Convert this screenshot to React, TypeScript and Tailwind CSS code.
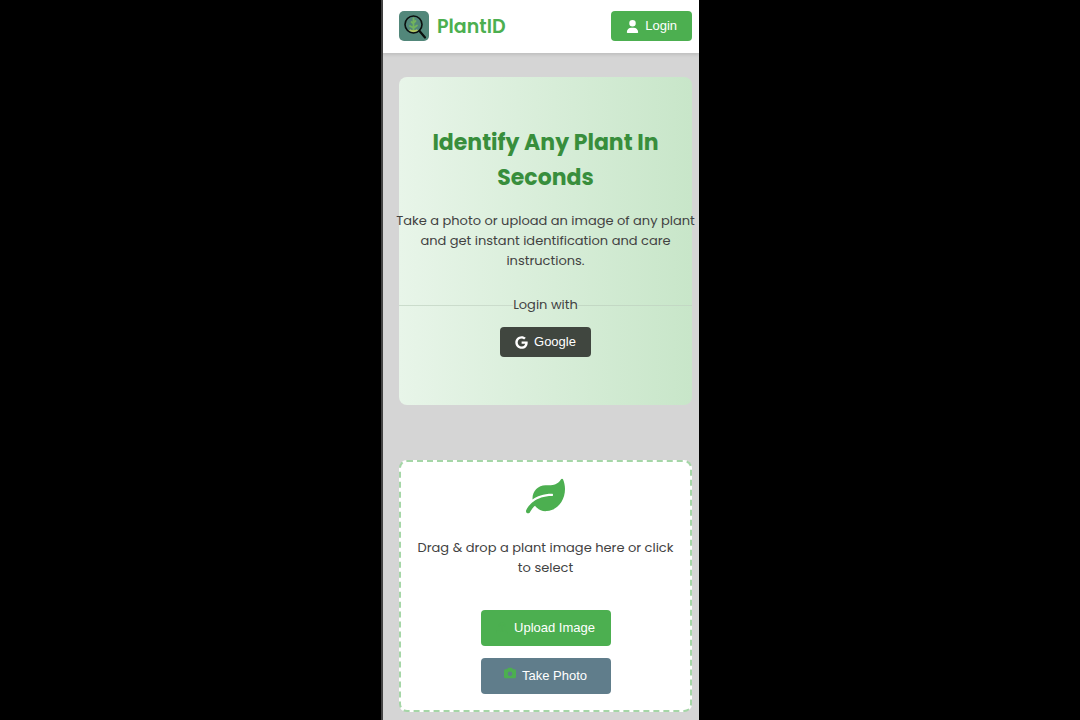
import React from "react";
import { FaGoogle, FaLeaf } from "react-icons/fa";
import { FaCamera, FaUpload, FaUser } from "react-icons/fa6";

interface ActionButtonProps {
  icon: React.ReactNode;
  children: React.ReactNode;
  className?: string;
}

function ActionButton({ icon, children, className = "" }: ActionButtonProps) {
  return (
    <button
      type="button"
      className={`flex items-center justify-center gap-1.5 rounded font-['Liberation_Sans',Arial,sans-serif] text-[13px] leading-4 text-white cursor-pointer ${className}`}
    >
      {icon}
      {children}
    </button>
  );
}

function Logo() {
  return (
    <svg viewBox="0 0 30 30" className="size-[30px]" aria-hidden="true">
      <rect width="30" height="30" rx="5" fill="#52877a" />
      <path
        d="M14.5 19V7.5M12.5 11l2 1.5M16.5 10l-2 2M11 15l3.5 2M18 14.5l-3.5 2.5"
        fill="none"
        stroke="#72b45c"
        strokeWidth="1.8"
        strokeLinecap="round"
      />
      <path d="M10.5 19q4 2.500 8 0" fill="none" stroke="#b3c660" strokeWidth="2" />
      <circle cx="14.5" cy="13.5" r="8.5" fill="none" stroke="#0b0f0e" strokeWidth="1.6" />
      <path d="M20.5 20l5.5 6.5" stroke="#0b0f0e" strokeWidth="2.2" strokeLinecap="round" />
    </svg>
  );
}

function Header() {
  return (
    <header className="flex items-center justify-between bg-white pt-[11px] pr-[7px] pb-3 pl-4 shadow-[0_2px_3px_rgba(0,0,0,0.1)]">
      <a href="#" className="flex items-center gap-2">
        <Logo />
        <span className="pt-px text-[19px] leading-7 font-semibold text-[#4caf50]">PlantID</span>
      </a>
      <ActionButton
        icon={<FaUser className="size-[13px]" />}
        className="h-[30px] bg-[#4caf50] px-[15px]"
      >
        Login
      </ActionButton>
    </header>
  );
}

function Hero() {
  return (
    <section className="rounded-lg bg-linear-to-r from-[#e8f5e9] to-[#c8e6c9] py-12 text-center">
      <h1 className="px-6 text-[22px] leading-[35px] font-bold text-[#388e3c]">
        Identify Any Plant In Seconds
      </h1>
      <p className="-mx-1 mt-4 text-[13px] leading-5 text-[#424242]">
        Take a photo or upload an image of any plant
        <br />
        and get instant identification and care
        <br />
        instructions.
      </p>
      <div className="mt-6 flex items-center text-[13px] leading-5 text-[#424242]">
        <span className="h-px flex-1 bg-[#cbdccc]" />
        Login with
        <span className="h-px flex-1 bg-[#c3d8c4]" />
      </div>
      <ActionButton
        icon={<FaGoogle className="size-[13px]" />}
        className="mx-auto mt-3 h-[30px] bg-[#40463f] px-[15px]"
      >
        Google
      </ActionButton>
    </section>
  );
}

function DropZone() {
  return (
    <section className="mt-[55px] flex flex-col items-center rounded-lg border-2 border-dashed border-[#a5d6a7] bg-white px-4 py-4 text-center">
      <FaLeaf className="h-9 w-[39px] text-[#4caf50]" />
      <p className="mt-6 text-[13px] leading-5 text-[#424242]">
        Drag &amp; drop a plant image here or click to select
      </p>
      <ActionButton
        icon={<FaUpload className="size-3 text-[#4caf50]" />}
        className="mt-8 h-9 w-[130px] bg-[#4caf50]"
      >
        Upload Image
      </ActionButton>
      <ActionButton
        icon={<FaCamera className="mb-1.5 size-3 text-[#4caf50]" />}
        className="mt-3 h-9 w-[130px] bg-[#607d8b]"
      >
        Take Photo
      </ActionButton>
    </section>
  );
}

export default function App() {
  return (
    <div className="min-h-screen bg-black font-['Poppins','Inter',sans-serif]">
      <div className="mx-auto min-h-screen w-full max-w-[318px] border-l-2 border-[#444444] bg-[#d5d5d5]">
        <Header />
        <main className="pt-6 pr-[7px] pb-2 pl-4">
          <Hero />
          <DropZone />
        </main>
      </div>
    </div>
  );
}
